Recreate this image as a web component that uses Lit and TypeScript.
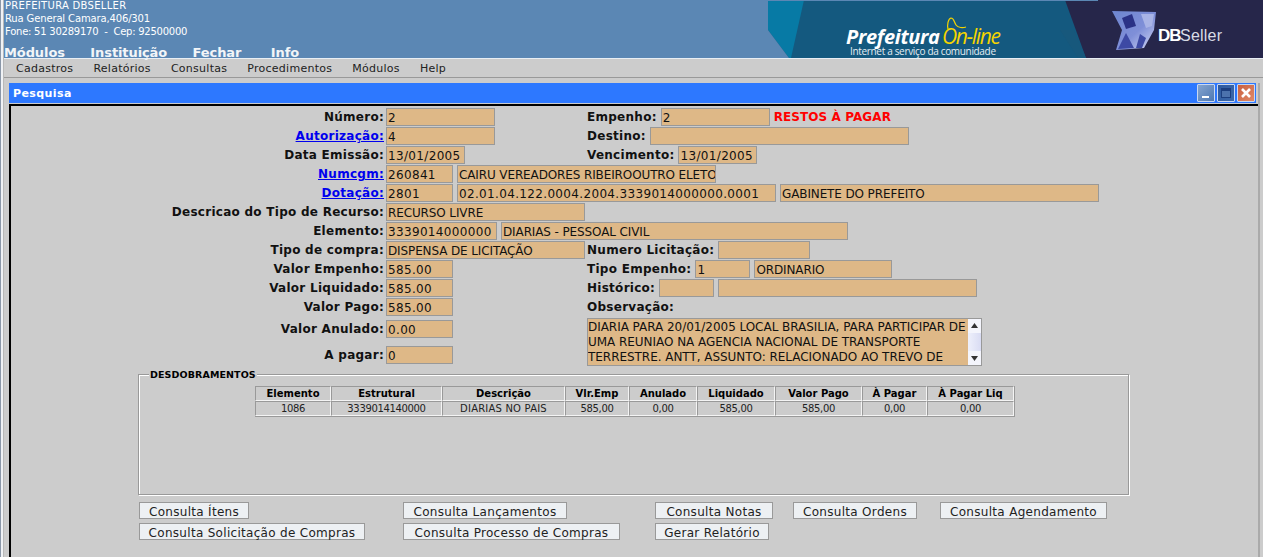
import { html, css, LitElement, svg } from 'lit';
import { customElement } from 'lit/decorators.js';

const cols = [
  ['Elemento', '1086', 76],
  ['Estrutural', '3339014140000', 111],
  ['Descrição', 'DIARIAS NO PAIS', 123],
  ['Vlr.Emp', '585,00', 64],
  ['Anulado', '0,00', 68],
  ['Liquidado', '585,00', 78],
  ['Valor Pago', '585,00', 87],
  ['À Pagar', '0,00', 65],
  ['À Pagar Liq', '0,00', 87],
];

const buttons: [string, number][] = [
  ['Consulta Ítens', 110],
  ['Consulta Lançamentos', 164],
  ['Consulta Notas', 118],
  ['Consulta Ordens', 124],
  ['Consulta Agendamento', 167],
  ['Consulta Solicitação de Compras', 226],
  ['Consulta Processo de Compras', 217],
  ['Gerar Relatório', 114],
];

@customElement('app-root')
export class AppRoot extends LitElement {
  static styles = css`
    :host {
      display: block;
      width: 1263px;
      height: 557px;
      overflow: hidden;
      background: #cccccc;
      font-family: "DejaVu Sans", sans-serif;
      font-size: 12px;
      color: #000;
    }
    .page {
      height: 557px;
      background: linear-gradient(90deg, #8a97a8 1px, #f0f2f5 1px 3px, #b8b8b8 3px 4px, #cccccc 4px);
    }
    .header {
      display: flex;
      justify-content: space-between;
      height: 58px;
      background: #5b87b4;
      border-bottom: 1px solid #e8eef4;
      margin-left: 4px;
    }
    .info {
      color: #fff;
      font-size: 10px;
      line-height: 13px;
      margin-top: -1px;
      padding-left: 1px;
      white-space: pre;
    }
    .l1 { letter-spacing: 0.3px; }
    .l2 { letter-spacing: -0.14px; }
    .l3 { letter-spacing: -0.24px; }
    .top-menu {
      display: flex;
      gap: 25.5px;
      margin-top: 8px;
      font-size: 13px;
      font-weight: bold;
      letter-spacing: -0.1px;
      line-height: 14px;
      color: #f2f5f8;
    }
    .top-menu .last { margin-left: 4px; }
    .banner { display: block; width: 495px; height: 58px; }
    .menu {
      display: flex;
      gap: 20px;
      height: 18px;
      padding-left: 12px;
      margin-left: 4px;
      font-size: 11px;
      letter-spacing: 0.27px;
      line-height: 19px;
      color: #222;
      border-bottom: 1px solid #999;
    }
    .window { margin: 5px 3px 0 9px; border-right: 2px solid #aaa; }
    .title {
      display: flex;
      align-items: center;
      justify-content: space-between;
      height: 20px;
      margin-right: 2px;
      padding: 0 1px 0 4px;
      background: #2d78ff;
      color: #fff;
      font-size: 11px;
      font-weight: bold;
      letter-spacing: 0.4px;
    }
    .wbtns { display: flex; gap: 2px; }
    .wbtn {
      box-sizing: border-box;
      width: 18px;
      height: 18px;
      border: 1px solid #c9d8f2;
      border-radius: 1px;
    }
    .wbtn svg { display: block; width: 16px; height: 16px; }
    .min { background: linear-gradient(135deg, #86a5cf, #4e78b2); }
    .max { background: linear-gradient(135deg, #2f5a9e, #3c68aa); }
    .close { background: linear-gradient(135deg, #c9603f, #e08a68); }
    .body {
      border-top: 2px solid #000;
      border-left: 2px solid #000;
      margin-top: 1px;
      height: 460px;
    }
    .form {
      display: grid;
      grid-template-columns: 375px 201px 1fr;
      grid-auto-rows: 19px;
      padding-top: 2px;
      white-space: nowrap;
    }
    .lbl {
      font-weight: bold;
      letter-spacing: 0.27px;
      color: #111;
      text-align: right;
      line-height: 18px;
      padding-right: 2px;
    }
    .lbl a { color: #0000ee; text-decoration: underline; }
    .cell { display: flex; gap: 4px; height: 17px; }
    .wide { grid-column: 2 / -1; }
    .right .lbl { padding-right: 0; }
    .in {
      box-sizing: border-box;
      height: 18px;
      border: 1px solid #999;
      background: #deb887;
      padding: 1px 1px 0;
      font-size: 12px;
      letter-spacing: -0.12px;
      line-height: 16px;
      color: #111;
      overflow: hidden;
    }
    .in.num { letter-spacing: 0.34px; }
    .red { color: #f00; font-weight: bold; line-height: 18px; letter-spacing: 0.08px; }
    .lower {
      grid-template-rows: 28px 20px;
      grid-auto-rows: auto;
      padding-top: 1px;
    }
    .offset { margin-top: 2px; }
    .obs {
      box-sizing: border-box;
      grid-column: 3;
      grid-row: 1 / span 2;
      display: flex;
      justify-content: space-between;
      width: 395px;
      height: 48px;
      border: 1px solid #999;
      background: #deb887;
      font-size: 12px;
      letter-spacing: -0.04px;
      line-height: 15px;
      overflow: hidden;
      color: #111;
    }
    .obs-text { padding: 1px 0 0 0; }
    .bar {
      display: flex;
      flex-direction: column;
      justify-content: space-between;
      width: 13px;
      background: linear-gradient(90deg, #eef0fb, #d9dcf3);
    }
    .bar svg { display: block; width: 13px; height: 14px; background: #f4f5fc; }
    .set {
      margin: 8px 0 0 127px;
      width: 991px;
      box-sizing: border-box;
      height: 121px;
      border: 1px solid #999;
      box-shadow: inset 1px 1px 0 #fff, 1px 1px 0 #fff;
      position: relative;
    }
    .legend {
      position: absolute;
      left: 10px;
      top: -6px;
      padding: 0 1px;
      background: #cccccc;
      font-size: 9.5px;
      font-weight: bold;
      letter-spacing: 0.1px;
      line-height: 12px;
    }
    table {
      border-collapse: separate;
      border-spacing: 0;
      margin: 11px 0 0 116px;
      table-layout: fixed;
      width: 758px;
      font-size: 10px;
      border-right: 1px solid #999;
      border-bottom: 1px solid #999;
    }
    td, th {
      height: 12px;
      padding: 0;
      text-align: center;
      line-height: 13px;
      border-top: 1px solid #999;
      border-left: 1px solid #999;
      border-right: 1px solid #f4f4f4;
      border-bottom: 1px solid #f4f4f4;
      overflow: hidden;
    }
    td { color: #222; letter-spacing: -0.34px; }
    td.txt { letter-spacing: 0.2px; }
    .btns {
      display: grid;
      grid-template-columns: 264px 252px 138px 147px auto;
      grid-auto-rows: 17px;
      gap: 4px 0;
      margin: 7px 0 0 128px;
    }
    button {
      justify-self: start;
      height: 17px;
      box-sizing: border-box;
      padding: 2px 0 0;
      border: 1px solid #999;
      background: #edf0f3;
      color: #222;
      font: 12px "DejaVu Sans", sans-serif;
      letter-spacing: 0.3px;
      line-height: 14px;
      white-space: nowrap;
    }
  `;

  private input(v: string, w: number, num = false) {
    return html`<div class="in ${num ? 'num' : ''}" style="width:${w}px">${v}</div>`;
  }

  private banner() {
    return svg`
      <defs>
        <linearGradient id="dbg" x1="0" y1="0" x2="1" y2="1">
          <stop offset="0" stop-color="#6d86cf"/>
          <stop offset=".55" stop-color="#7f8fd8"/>
          <stop offset="1" stop-color="#d8dcf5"/>
        </linearGradient>
        <filter id="soft"><feGaussianBlur stdDeviation="0.7"/></filter>
      </defs>
      <rect width="495" height="58" fill="#14597f"/>
      <polygon points="0,0 36,0 23,58 21,58 0,30" fill="#077aa5"/>
      <polygon points="0,30 21,58 0,58" fill="#5b87b4"/>
      <polygon points="297,0 495,0 495,58 318,58" fill="#26264a"/>
      <polygon points="292,30 310,58 318,58 306,30" fill="#17587c"/>
      <rect width="330" height="1" fill="#5b87b4"/>
      <text x="78" y="44" font-family="Open Sans, sans-serif" font-size="20" font-weight="700" font-style="italic" fill="#fff" textLength="94">Prefeitura</text>
      <text x="174" y="44" font-family="Open Sans, sans-serif" font-size="21" font-style="italic" font-weight="400" fill="#f5d400" textLength="59">On-line</text>
      <path d="M180 29c-1-4 0-10 3-11 3 0 3 4 5 7 2 3 7 3 10 2" fill="none" stroke="#f5d400" stroke-width="1.2"/>
      <text x="82" y="55" font-family="Open Sans, sans-serif" font-size="10" fill="#e6edf2" textLength="146">Internet a serviço da comunidade</text>
      <g filter="url(#soft)">
        <polygon points="344,11 388,12 386,30 376,48 348,50 354,30" fill="url(#dbg)"/>
        <polygon points="354,18 364,14 368,26 358,29" fill="#2c3286"/>
        <polygon points="350,49 358,33 366,48" fill="#3d4aa4"/>
        <polygon points="368,48 372,34 378,38 374,48" fill="#3d4aa4"/>
        <polygon points="373,14 386,14 384,26 378,28" fill="#a9b4e6"/>
      </g>
      <text x="390" y="41" font-family="Liberation Sans, sans-serif" font-size="17" font-weight="700" fill="#fff" letter-spacing="-1">DB</text>
      <text x="412" y="41" font-family="Liberation Sans, sans-serif" font-size="16" fill="#d8dbe6" textLength="42">Seller</text>
    `;
  }

  render() {
    return html`
      <div class="page">
        <div class="header">
          <div>
            <div class="info"><div class="l1">PREFEITURA DBSELLER</div><div class="l2">Rua General Camara,406/301</div><div class="l3">Fone: 51 30289170  -  Cep: 92500000</div></div>
            <div class="top-menu"><span>Módulos</span><span>Instituição</span><span>Fechar</span><span class="last">Info</span></div>
          </div>
          <svg class="banner" viewBox="0 0 495 58">${this.banner()}</svg>
        </div>
        <div class="menu">
          <span>Cadastros</span><span>Relatórios</span><span>Consultas</span><span>Procedimentos</span><span>Módulos</span><span>Help</span>
        </div>
        <div class="window">
          <div class="title">
            <span>Pesquisa</span>
            <div class="wbtns">
              <div class="wbtn min"><svg viewBox="0 0 16 16"><rect x="4" y="11" width="7" height="2" fill="#fff"/></svg></div>
              <div class="wbtn max"><svg viewBox="0 0 16 16"><rect x="3.5" y="3.5" width="9" height="9" fill="#4c72ad" stroke="#1d3f80"/><rect x="4" y="4" width="8" height="2" fill="#1d3f80"/></svg></div>
              <div class="wbtn close"><svg viewBox="0 0 16 16"><path d="M4 4l8 8M12 4l-8 8" stroke="#fff" stroke-width="2.6"/></svg></div>
            </div>
          </div>
          <div class="body">
            <div class="form">
              <div class="lbl">Número:</div>
              <div class="cell">${this.input('2', 109, true)}</div>
              <div class="cell right"><span class="lbl">Empenho:</span>${this.input('2', 109, true)}<span class="red">RESTOS À PAGAR</span></div>

              <div class="lbl"><a>Autorização:</a></div>
              <div class="cell">${this.input('4', 109, true)}</div>
              <div class="cell right"><span class="lbl">Destino:</span>${this.input('', 259)}</div>

              <div class="lbl">Data Emissão:</div>
              <div class="cell">${this.input('13/01/2005', 79, true)}</div>
              <div class="cell right"><span class="lbl">Vencimento:</span>${this.input('13/01/2005', 79, true)}</div>

              <div class="lbl"><a>Numcgm:</a></div>
              <div class="cell wide">${this.input('260841', 67, true)}${this.input('CAIRU VEREADORES RIBEIROOUTRO ELETO', 259)}</div>

              <div class="lbl"><a>Dotação:</a></div>
              <div class="cell wide">${this.input('2801', 67, true)}${this.input('02.01.04.122.0004.2004.3339014000000.0001', 319, true)}${this.input('GABINETE DO PREFEITO', 319)}</div>

              <div class="lbl">Descricao do Tipo de Recurso:</div>
              <div class="cell wide">${this.input('RECURSO LIVRE', 199)}</div>

              <div class="lbl">Elemento:</div>
              <div class="cell wide">${this.input('3339014000000', 111, true)}${this.input('DIARIAS - PESSOAL CIVIL', 347)}</div>

              <div class="lbl">Tipo de compra:</div>
              <div class="cell">${this.input('DISPENSA DE LICITAÇÃO', 199)}</div>
              <div class="cell right"><span class="lbl">Numero Licitação:</span>${this.input('', 92)}</div>

              <div class="lbl">Valor Empenho:</div>
              <div class="cell">${this.input('585.00', 67, true)}</div>
              <div class="cell right"><span class="lbl">Tipo Empenho:</span>${this.input('1', 55, true)}${this.input('ORDINARIO', 138)}</div>

              <div class="lbl">Valor Liquidado:</div>
              <div class="cell">${this.input('585.00', 67, true)}</div>
              <div class="cell right"><span class="lbl">Histórico:</span>${this.input('', 55)}${this.input('', 259)}</div>

              <div class="lbl">Valor Pago:</div>
              <div class="cell">${this.input('585.00', 67, true)}</div>
              <div class="cell right"><span class="lbl">Observação:</span></div>
            </div>
            <div class="form lower">
              <div class="lbl offset">Valor Anulado:</div>
              <div class="cell offset">${this.input('0.00', 67, true)}</div>
              <div class="obs">
                <div class="obs-text">DIARIA PARA 20/01/2005 LOCAL BRASILIA, PARA PARTICIPAR DE<br>UMA REUNIAO NA AGENCIA NACIONAL DE TRANSPORTE<br>TERRESTRE. ANTT, ASSUNTO: RELACIONADO AO TREVO DE</div>
                <div class="bar">
                  <svg viewBox="0 0 13 14"><path d="M3 9l3.5-5L10 9z" fill="#333"/></svg>
                  <svg viewBox="0 0 13 14"><path d="M3 5l3.5 5L10 5z" fill="#333"/></svg>
                </div>
              </div>
              <div class="lbl" style="grid-column:1;grid-row:2">A pagar:</div>
              <div class="cell" style="grid-column:2;grid-row:2">${this.input('0', 67, true)}</div>
            </div>
            <div class="set">
              <div class="legend">DESDOBRAMENTOS</div>
              <table>
                <colgroup>${cols.map(c => html`<col style="width:${c[2]}px">`)}</colgroup>
                <tr>${cols.map(c => html`<th>${c[0]}</th>`)}</tr>
                <tr>${cols.map((c, i) => html`<td class=${i === 2 ? 'txt' : ''}>${c[1]}</td>`)}</tr>
              </table>
            </div>
            <div class="btns">
              ${buttons.map(b => html`<button style="width:${b[1]}px">${b[0]}</button>`)}
            </div>
          </div>
        </div>
      </div>
    `;
  }
}
